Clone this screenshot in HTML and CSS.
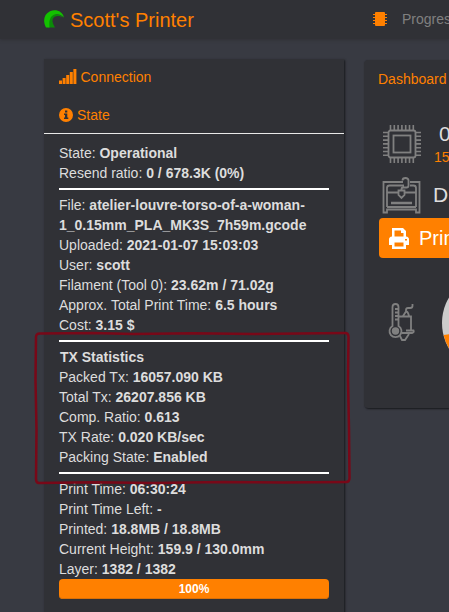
FILE: index.html
```html
<!DOCTYPE html>
<html lang="en">
<head>
<meta charset="utf-8">
<title>Scott's Printer</title>
<link rel="stylesheet" href="styles.css">
</head>
<body>
<header class="navbar">
  <svg class="logo" width="20" height="18" viewBox="0 0 20 18"><path fill="#0b8a08" d="M4 17.500C3.500 11 5 5 10 4.500 14 4 18 5 19.700 7.800 15 5 10 5.500 8.600 9.500 8 12 9.500 15 11 17.500z"/><path fill="#13c100" d="M2 17.500C-1.500 11 0 4 6 1.200 12-1.200 19 1.500 19.800 7.500 17 4.500 13 3.500 9.500 5 5.500 7 5 12 5.500 17.500z"/></svg>
  <h1 class="brand">Scott's Printer</h1>
  <svg class="chip" width="16" height="16" viewBox="0 0 16 16"><rect x="3" y="1" width="10" height="14" rx="1" fill="#ff8000"/><path stroke="#ff8000" stroke-width="1.200" d="M1 3.500h14M1 6.500h14M1 9.500h14M1 12.500h14"/></svg>
  <span class="progress-label">Progress</span>
</header>
<main class="columns">
  <aside class="sidebar">
    <div class="heading heading-connection">
      <svg width="18" height="15" viewBox="0 0 18 15"><path fill="#ff8000" d="M0 11.500h3V15H0zM3.600 9h3v6h-3zM7.200 6h3v9h-3zM10.800 3h3v12h-3zM14.400 0h3v15h-3z"/></svg>
      <span>Connection</span>
    </div>
    <div class="heading heading-state">
      <svg width="14" height="14" viewBox="0 0 14 14"><circle cx="7" cy="7" r="7" fill="#ff8000"/><path fill="#303136" d="M6 2.500h2.300v2H6zM5 5.600h3.300v4H9.300v1.500H5V9.600h1V7H5z"/></svg>
      <span>State</span>
    </div>
    <div class="state">
      <div>State: <b>Operational</b></div>
      <div>Resend ratio: <b>0 / 678.3K (0%)</b></div>
      <hr>
      <div>File: <b>atelier-louvre-torso-of-a-woman-<br>1_0.15mm_PLA_MK3S_7h59m.gcode</b></div>
      <div>Uploaded: <b>2021-01-07 15:03:03</b></div>
      <div>User: <b>scott</b></div>
      <div>Filament (Tool 0): <b>23.62m / 71.02g</b></div>
      <div>Approx. Total Print Time: <b>6.5 hours</b></div>
      <div>Cost: <b>3.15 $</b></div>
      <section class="stats">
        <hr>
        <div class="stats-title"><b>TX Statistics</b></div>
        <div>Packed Tx: <b>16057.090 KB</b></div>
        <div>Total Tx: <b>26207.856 KB</b></div>
        <div>Comp. Ratio: <b>0.613</b></div>
        <div>TX Rate: <b>0.020 KB/sec</b></div>
        <div>Packing State: <b>Enabled</b></div>
        <hr>
        <svg class="marker" width="320" height="156" viewBox="0 0 320 156"><path fill="none" stroke="#780818" stroke-width="2.500" d="M7 3.500L60 3 100 4 160 3.300 220 4 312 3Q315.500 3 315.500 7L315 50 316 100 316.500 148Q316.500 152 313 152L250 152.500 190 152 120 153 60 152.300 6 153Q3 153 3 149L3.500 100 2.500 50 3 7Q3 3.500 7 3.500z"/></svg>
      </section>
      <div>Print Time: <b>06:30:24</b></div>
      <div>Print Time Left: <b>-</b></div>
      <div>Printed: <b>18.8MB / 18.8MB</b></div>
      <div>Current Height: <b>159.9 / 130.0mm</b></div>
      <div>Layer: <b>1382 / 1382</b></div>
      <div class="bar">100%</div>
    </div>
  </aside>
  <section class="dashboard">
    <div class="tab">Dashboard</div>
    <div class="row cpu">
      <svg width="38" height="38" viewBox="0 0 38 38" fill="none" stroke="#808080"><rect x="5.500" y="5.500" width="27" height="27" rx="2" stroke-width="1.800"/><rect x="10.500" y="10.500" width="17" height="17" stroke-width="1.800"/><path stroke-width="1.600" d="M7.500 0v5M11.300 0v5M15.100 0v5M18.900 0v5M22.700 0v5M26.500 0v5M30.300 0v5M7.500 33v5M11.300 33v5M15.100 33v5M18.900 33v5M22.700 33v5M26.500 33v5M30.300 33v5M0 7.500h5M0 11.300h5M0 15.100h5M0 18.900h5M0 22.700h5M0 26.500h5M0 30.300h5M33 7.500h5M33 11.300h5M33 15.100h5M33 18.900h5M33 22.700h5M33 26.500h5M33 30.300h5"/></svg>
      <div class="load"><span class="big">0</span><span class="small">15</span></div>
    </div>
    <div class="row machine">
      <svg width="39" height="37" viewBox="0 0 39 37" fill="none" stroke="#808080" stroke-width="1.800"><path d="M21 5H1.500V35.500H5V32.500h29v3h3.500V5H28M5 30V11q0-2.500 2.500-2.500H22M28 8.500h3.500q2.500 0 2.500 2.500v19M5 30h29M5 15.500h11M23 15.500h11M16.500 13.500h6v4.500l-3 3-3-3zM19.500 13.500V12q0-1.500 2-1.500h3q2 0 2-2V3.500q0-2.500-3-2.500t-3 2.500"/><path stroke-width="2.500" d="M9 26h21"/></svg>
      <span class="big">D</span>
    </div>
    <div class="print-button">
      <svg width="20" height="21" viewBox="0 0 20 21"><path fill="#fff" fill-rule="evenodd" d="M3 0h11l3 3v5.500q3 .3 3 3V17h-3v4H3v-4H0v-5.500q0-2.700 3-3zm2.500 2.500v6h9V5H12V2.500zm0 12v4h9v-4zM16 11v1.500h2V11z"/></svg>
      <span>Print</span>
    </div>
    <div class="row temps">
      <svg width="28" height="39" viewBox="0 0 28 39" fill="none" stroke="#808080" stroke-width="1.800"><path d="M4.500 23V4q0-3 3-3t3 3v19a6 6 0 1 1-6 0z"/><path d="M7 6h4M7 9.500h4M7 13h4M7 16.500h4M11 13.500h12V28M15 13l3-4.500q2 0 3 4.500M18 9v-2q0-2 2-2h2q2.500 0 2.500-2V1M14 30h10q2.500-.5 1.500-2.500H18M12 33l2 4h3l4-6"/><circle cx="7.500" cy="28" r="2.800" fill="#808080"/></svg>
      <svg class="gauge" width="7" height="60" viewBox="0 0 7 60"><circle cx="50" cy="30" r="50" fill="#ccc"/><path fill="#ff8000" d="M1.600 42L7 41.200V55.500A50 50 0 0 1 1.600 42z"/></svg>
    </div>
  </section>
</main>
</body>
</html>
```
FILE: styles.css
```css
* { box-sizing: border-box; }
html { overflow: hidden; }
body {
  margin: 0;
  width: 449px;
  height: 612px;
  overflow: hidden;
  background: #383a42;
  color: #ddd;
  font: 14px/20px "Liberation Sans", Arial, sans-serif;
}
svg { display: block; flex: none; }
.navbar {
  display: flex;
  align-items: center;
  width: 449px;
  height: 39px;
  padding-left: 44px;
  background: #303136;
  box-shadow: 0 1px 3px #303136;
  white-space: nowrap;
}
.logo { margin-top: -1px; }
.brand {
  flex: none;
  width: 302px;
  margin: 0 0 0 6px;
  color: #ff8000;
  font-size: 20px;
  font-weight: 400;
  line-height: 38px;
}
.chip { margin-top: -1px; }
.progress-label { margin: -1px 0 0 14px; color: #808080; }
.columns {
  display: flex;
  align-items: flex-start;
  gap: 20px;
  height: 573px;
  padding: 20px 0 0 44px;
}
.sidebar, .dashboard {
  flex: none;
  background: #303136;
  box-shadow: 1px 1px 2px #17181b;
}
.sidebar { width: 300px; height: 560px; }
.heading {
  display: flex;
  align-items: center;
  gap: 4px;
  height: 37px;
  padding-left: 15px;
  color: #ff8000;
}
.heading-connection { padding-bottom: 2px; gap: 3.500px; }
.heading-state { height: 38px; border-bottom: 1px solid #e8e8e8; }
.state { padding: 9px 15px 0; white-space: nowrap; }
.state hr { height: 2px; margin: 5px 0; border: 0; background: #fff; }
.stats { position: relative; display: flow-root; }
.stats-title { padding-left: 1px; }
.marker { position: absolute; left: -26px; top: -5px; }
.bar {
  height: 20px;
  border-radius: 4px;
  background: #ff8000;
  box-shadow: inset 0 -1px 0 #d97008;
  color: #fff;
  font-size: 12px;
  font-weight: 700;
  text-align: center;
}
.dashboard {
  width: 85px;
  height: 348px;
  margin-top: 1px;
  border-radius: 4px 0 0 4px;
  white-space: nowrap;
}
.tab { height: 38px; padding-left: 14px; color: #ff8000; line-height: 38px; }
.row { display: flex; }
.cpu { height: 78px; padding: 27px 0 0 19px; }
.load { display: flex; flex-direction: column; margin: -3px 0 0 18px; }
.big { font-size: 21px; line-height: 24px; }
.small { margin-left: -5px; color: #ff8000; line-height: 22px; }
.machine { height: 42px; align-items: flex-start; padding: 1px 0 0 18px; gap: 12px; }
.machine .big { margin-top: 6px; }
.print-button {
  display: flex;
  align-items: center;
  gap: 10px;
  height: 40px;
  margin-left: 15px;
  padding-left: 10px;
  border-radius: 4px 0 0 4px;
  background: #ff8000;
  color: #fff;
  font-size: 20px;
}
.temps { align-items: center; gap: 26px; height: 129px; padding-left: 24px; }
```
